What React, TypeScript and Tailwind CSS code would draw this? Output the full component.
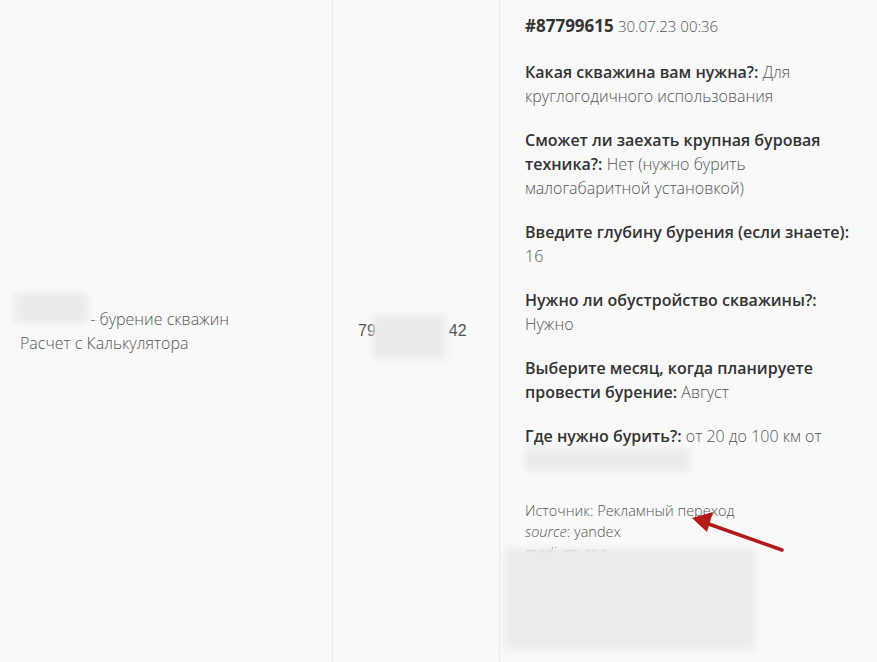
import React from 'react';

const fields = [
  { q: 'Какая скважина вам нужна?:', a: 'Для круглогодичного использования' },
  { q: 'Сможет ли заехать крупная буровая техника?:', a: 'Нет (нужно бурить малогабаритной установкой)' },
  { q: 'Введите глубину бурения (если знаете):', a: '16' },
  { q: 'Нужно ли обустройство скважины?:', a: 'Нужно' },
  { q: 'Выберите месяц, когда планируете провести бурение:', a: 'Август' },
];

function Blur({ className }: { className: string }) {
  return <div className={'rounded-sm bg-[#ebebeb] blur-[3px] ' + className} />;
}

export default function App() {
  return (
    <div className="flex h-[662px] w-full bg-[#f9f9f9] text-[16px] leading-6 text-[#555] [font-family:'Open_Sans',sans-serif]">
      {/* site / form */}
      <div className="flex w-[333px] shrink-0 items-center border-r border-[#ececec] pl-[20px]">
        <div className="relative font-light">
          <div>
            <span className="inline-block w-[66px]" /> - бурение скважин
          </div>
          <div>Расчет с Калькулятора</div>
          <Blur className="absolute left-[-5px] top-[-14px] h-[30px] w-[73px]" />
        </div>
      </div>

      {/* phone */}
      <div className="flex w-[167px] shrink-0 items-center border-r border-[#ececec] pl-[25px]">
        <div className="relative flex font-light [font-family:'Liberation_Sans',sans-serif]">
          <span>79</span>
          <span className="inline-block w-[73px]" />
          <span>42</span>
          <Blur className="absolute left-[15px] top-[-4px] h-[44px] w-[73px]" />
        </div>
      </div>

      {/* order */}
      <div className="relative flex-1 pl-[25px] pr-4 pt-[14px]">
        <div className="mb-[22px]">
          <span className="text-[17px] font-bold text-[#333]">#87799615</span>{' '}
          <span className="text-[15px] font-light">30.07.23 00:36</span>
        </div>
        {fields.map((f) => (
          <p key={f.q} className="mb-5 font-light">
            <span className="font-semibold text-[#333]">{f.q}</span> {f.a}
          </p>
        ))}
        <p className="font-light">
          <span className="font-semibold text-[#333]">Где нужно бурить?:</span> от 20 до 100 км от
        </p>
        <Blur className="mb-[28px] h-[24px] w-[165px]" />

        <div className="relative text-[14.5px] leading-[21px] font-light text-[#555]">
          <div>Источник: Рекламный переход</div>
          <div>
            <i>source</i>: yandex
          </div>
          <div>
            <i>medium</i>: cpc
          </div>
          <svg className="absolute left-[160px] top-[4px]" width="100" height="50" viewBox="0 0 100 50">
            <line x1="97" y1="46" x2="18" y2="18" stroke="#b51a1a" strokeWidth="3.5" strokeLinecap="round" />
            <polygon points="7,14 28,8 22,28" fill="#b51a1a" />
          </svg>
        </div>
        <div className="absolute left-[5px] top-[548px] h-[102px] w-[250px] bg-[#ececec] blur-[3px]" />
      </div>
    </div>
  );
}
